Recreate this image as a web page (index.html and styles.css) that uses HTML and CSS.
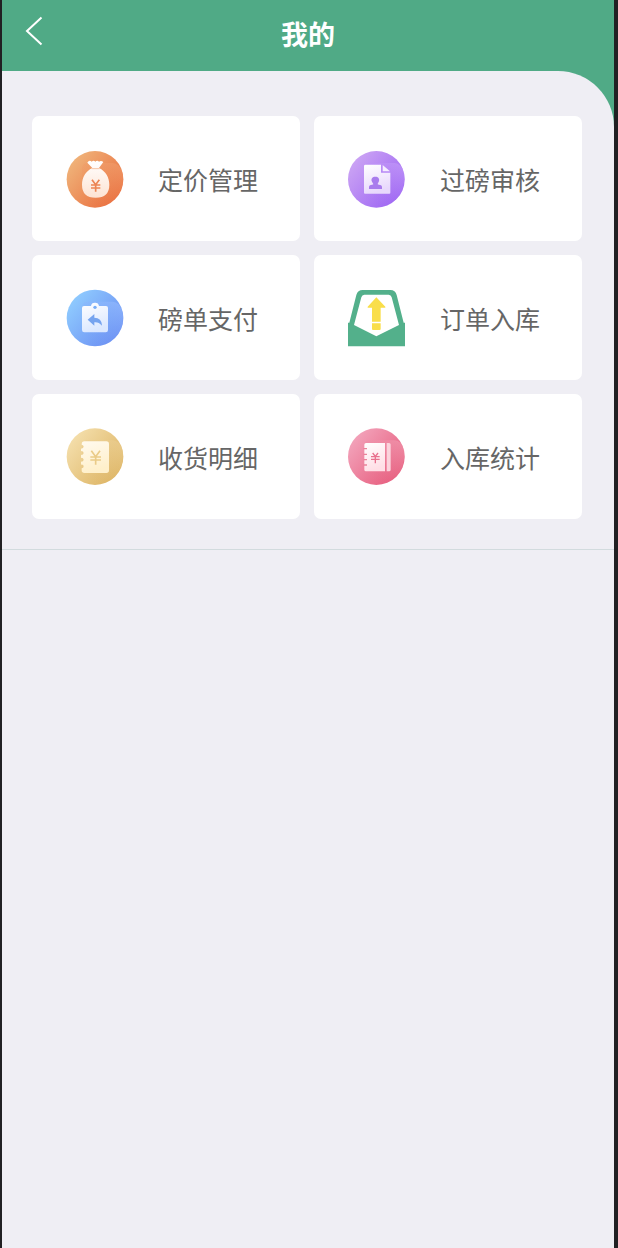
FILE: index.html
```html
<!DOCTYPE html>
<html lang="zh-CN">
<head>
<meta charset="utf-8">
<meta name="viewport" content="width=device-width, initial-scale=1">
<title>我的</title>
<link rel="stylesheet" href="styles.css">
</head>
<body>
<div class="app">
  <header class="header">
    <button class="back" type="button" aria-label="返回">
      <svg class="back-icon" viewBox="0 0 18 30" aria-hidden="true"><path d="M16.500 1.500 2 15l14.500 13.500"/></svg>
    </button>
    <h1 class="title">我的</h1>
  </header>
  <main class="content">
    <nav class="menu">
      <a class="card" href="#pricing">
        <svg class="icon" viewBox="18 15 174 174" aria-hidden="true">
          <defs>
            <linearGradient id="orange" x1="0" y1="0.100" x2="1" y2="0.900"><stop offset="0.050" stop-color="#f0b67c"/><stop offset="0.950" stop-color="#e96a3b"/></linearGradient>
            <linearGradient id="orange-shine" x1="1" y1="0" x2="0.300" y2="1"><stop offset="0" stop-color="#f2a271" stop-opacity="0.600"/><stop offset="1" stop-color="#ee8a57" stop-opacity="0"/></linearGradient>
            <linearGradient id="bag" x1="0" y1="0" x2="0" y2="1"><stop offset="0" stop-color="#fff"/><stop offset="1" stop-color="#fde3d3"/></linearGradient>
          </defs>
          <circle cx="105" cy="103" r="85" fill="url(#orange)"/>
          <path d="M66 160V70q0-16 18-16h74q20 0 30 30 6 45-20 75-26 28-62 29-26-6-40-28z" fill="url(#orange-shine)"/>
          <path d="M84 50q6-5 11 0 6-5 11 0 6-5 11 0 6-5 13 1l-13 18c20 10 31 28 31 50q0 39-41 39t-41-39c0-22 11-40 31-50L82 53z" fill="url(#bag)"/>
          <path d="M95 71h24" stroke="#f6c3a4" stroke-width="3"/>
          <path d="m96 104 11 15 11-15M93 120h28M93 129h28M107 119v21" fill="none" stroke="#ec8453" stroke-width="5"/>
        </svg>
        <span class="label">定价管理</span>
      </a>
      <a class="card" href="#weigh-review">
        <svg class="icon" viewBox="18 15 174 174" aria-hidden="true">
          <defs>
            <linearGradient id="purple" x1="0" y1="0.100" x2="1" y2="0.900"><stop offset="0.050" stop-color="#cda6f4"/><stop offset="0.950" stop-color="#9b62f3"/></linearGradient>
            <linearGradient id="purple-shine" x1="1" y1="0" x2="0.300" y2="1"><stop offset="0" stop-color="#c7a0fa" stop-opacity="0.650"/><stop offset="1" stop-color="#a974f4" stop-opacity="0"/></linearGradient>
            <linearGradient id="page" x1="0" y1="0" x2="0.300" y2="1"><stop offset="0" stop-color="#fff"/><stop offset="1" stop-color="#e8d8fc"/></linearGradient>
          </defs>
          <circle cx="103" cy="103" r="85" fill="url(#purple)"/>
          <path d="M66 160V70q0-16 18-16h74q20 0 28 30 6 45-20 75-26 28-62 29-24-6-38-28z" fill="url(#purple-shine)"/>
          <path d="M70 59h47v24h28v60q0 3-3 3H69q-3 0-3-3V63q0-4 4-4z" fill="url(#page)"/>
          <path d="M122 60v19h22z" fill="#f5edff"/>
          <path d="M100 95c9 0 13 6 11 13-1 5-4 6-4 10 4 2 12 2 13 7v7H81v-7c1-5 9-5 13-7 0-4-4-5-5-10-2-7 2-13 11-13z" fill="#a97ced"/>
        </svg>
        <span class="label">过磅审核</span>
      </a>
      <a class="card" href="#payment">
        <svg class="icon" viewBox="18 17 174 174" aria-hidden="true">
          <defs>
            <linearGradient id="blue" x1="0" y1="0.100" x2="1" y2="0.900"><stop offset="0.050" stop-color="#91ceff"/><stop offset="0.950" stop-color="#698bf2"/></linearGradient>
            <linearGradient id="blue-shine" x1="1" y1="0" x2="0.300" y2="1"><stop offset="0" stop-color="#98bdff" stop-opacity="0.650"/><stop offset="1" stop-color="#78a7f8" stop-opacity="0"/></linearGradient>
            <linearGradient id="clipboard" x1="0" y1="0" x2="0.300" y2="1"><stop offset="0" stop-color="#fff"/><stop offset="1" stop-color="#dbe8ff"/></linearGradient>
          </defs>
          <circle cx="105" cy="104" r="85" fill="url(#blue)"/>
          <path d="M66 161V71q0-16 18-16h74q20 0 30 30 6 45-20 75-26 28-62 29-26-6-40-28z" fill="url(#blue-shine)"/>
          <path d="M72 68h21q1-10 12-10t12 10h21q6 0 6 6v66q0 7-7 7H73q-7 0-7-7V74q0-6 6-6z" fill="url(#clipboard)"/>
          <circle cx="105" cy="72" r="5" fill="#77adf8"/>
          <path d="m83 109 20-17v11c14 0 23 8 23 24-7-8-14-11-23-10v10z" fill="#76a4ef"/>
        </svg>
        <span class="label">磅单支付</span>
      </a>
      <a class="card" href="#stock-in">
        <svg class="icon" viewBox="18 17 174 174" aria-hidden="true">
          <path d="M18 118h4L43 35q4-15 19-15h83q15 0 19 15l21 83h4v71H18z" fill="#53b08b"/>
          <path d="M36 125 58 42q2-8 9-8h73q7 0 9 8l22 83-68 34z" fill="#fff"/>
          <path d="m103 42 27 28q2 3-2 3h-12v42H90V73H79q-4 0-2-3zM90 120h26v17q0 3-3 3H93q-3 0-3-3z" fill="#f9de4a"/>
        </svg>
        <span class="label">订单入库</span>
      </a>
      <a class="card" href="#receipts">
        <svg class="icon" viewBox="18 17 174 174" aria-hidden="true">
          <defs>
            <linearGradient id="gold" x1="0" y1="0.100" x2="1" y2="0.900"><stop offset="0.050" stop-color="#f5e0ae"/><stop offset="0.950" stop-color="#dcb260"/></linearGradient>
            <linearGradient id="gold-shine" x1="1" y1="0" x2="0.300" y2="1"><stop offset="0" stop-color="#ecd094" stop-opacity="0.650"/><stop offset="1" stop-color="#e5c17a" stop-opacity="0"/></linearGradient>
            <linearGradient id="ledger" x1="0" y1="0" x2="0.300" y2="1"><stop offset="0" stop-color="#fffaf0"/><stop offset="1" stop-color="#fff0cb"/></linearGradient>
          </defs>
          <circle cx="105" cy="103" r="85" fill="url(#gold)"/>
          <path d="M66 160V70q0-16 18-16h74q20 0 30 30 6 45-20 75-26 28-62 29-26-6-40-28z" fill="url(#gold-shine)"/>
          <path d="M73 57h66q8 0 8 8v79q0 8-8 8H73q-8 0-8-8v-6q6 0 6-6t-8-5v-9q8 0 8-6t-8-6v-8q8 0 8-6t-8-6v-7q8-1 8-6t-6-6q0-10 8-10z" fill="url(#ledger)"/>
          <path d="m94 85 13 18 13-18M91 104h32M91 113h32M107 102v25" fill="none" stroke="#eacb88" stroke-width="5"/>
        </svg>
        <span class="label">收货明细</span>
      </a>
      <a class="card" href="#stock-stats">
        <svg class="icon" viewBox="18 17 174 174" aria-hidden="true">
          <defs>
            <linearGradient id="pink" x1="0" y1="0.100" x2="1" y2="0.900"><stop offset="0.050" stop-color="#f3a6bd"/><stop offset="0.950" stop-color="#e65879"/></linearGradient>
            <linearGradient id="pink-shine" x1="1" y1="0" x2="0.300" y2="1"><stop offset="0" stop-color="#f29db2" stop-opacity="0.650"/><stop offset="1" stop-color="#ea7895" stop-opacity="0"/></linearGradient>
            <linearGradient id="notebook" x1="0" y1="0" x2="0.300" y2="1"><stop offset="0" stop-color="#fff"/><stop offset="1" stop-color="#ffdfe6"/></linearGradient>
          </defs>
          <circle cx="103" cy="103" r="85" fill="url(#pink)"/>
          <path d="M66 160V70q0-16 18-16h74q20 0 28 30 6 45-20 75-26 28-62 29-24-6-38-28z" fill="url(#pink-shine)"/>
          <path d="M72 62h57v85H72q-5 0-5-5V67q0-5 5-5z" fill="url(#notebook)"/>
          <path d="M134 62h7q5 0 5 5v75q0 5-5 5h-7z" fill="#fbd3dc"/>
          <path d="M64 79h11M64 96h11M64 112h11M64 128h11" stroke="#e9839b" stroke-width="4"/>
          <path d="m92 92 8 10 8-10M87 103h26M87 111h26M100 102v21" fill="none" stroke="#e8718e" stroke-width="4"/>
        </svg>
        <span class="label">入库统计</span>
      </a>
    </nav>
  </main>
</div>
</body>
</html>
```
FILE: styles.css
```css
* {
  box-sizing: border-box;
}

body {
  margin: 0;
  background: #212023;
  font-family: "Noto Sans CJK SC", "Noto Sans", sans-serif;
}

.app {
  min-height: 100vh;
  margin: 0 4px 0 2px;
  background: #efeef4;
}

.header {
  display: grid;
  grid-template-columns: 64px 1fr 64px;
  align-items: center;
  height: 71px;
  padding-bottom: 4px;
  background: #50aa86;
  color: #fff;
}

.back {
  display: flex;
  padding: 0 0 6px 23px;
  border: 0;
  background: none;
  cursor: pointer;
}

.back-icon {
  width: 18px;
  height: 30px;
  fill: none;
  stroke: #fff;
  stroke-width: 2;
}

.title {
  margin: 0;
  font-size: 27px;
  line-height: 40px;
  font-weight: 700;
  text-align: center;
}

.content {
  background: #50aa86;
}

.menu {
  display: grid;
  grid-template-columns: 1fr 1fr;
  gap: 14px;
  padding: 45px 32px 30px 30px;
  border-bottom: 1px solid #d2dbde;
  border-top-right-radius: 56px;
  background: #efeef4;
}

.card {
  display: flex;
  align-items: center;
  gap: 34px;
  height: 125px;
  padding: 0 34px;
  border-radius: 7px;
  background: #fff;
  color: #666;
  text-decoration: none;
}

.icon {
  flex: none;
  width: 58px;
  height: 58px;
}

.label {
  font-size: 25px;
  line-height: 38px;
  white-space: nowrap;
}
```
